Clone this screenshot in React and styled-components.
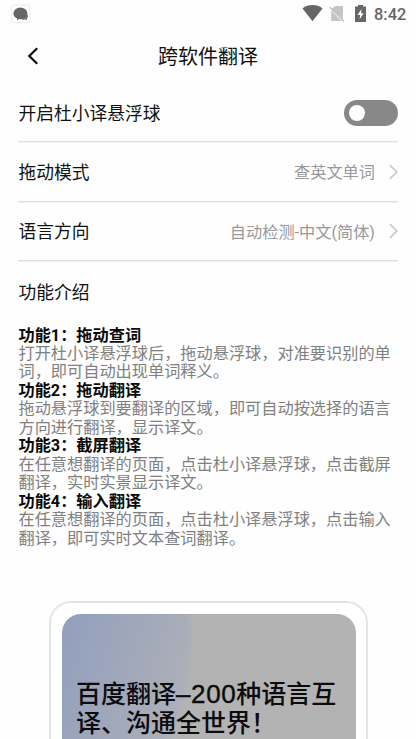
import styled, { createGlobalStyle } from "styled-components";

const GlobalStyle = createGlobalStyle`
  * {
    box-sizing: border-box;
  }

  body {
    margin: 0;
    background: #fefefe;
    font-family: Roboto, "Noto Sans CJK SC", sans-serif;
  }
`;

const Page = styled.div`
  height: 739px;
  overflow: hidden;
  display: flex;
  flex-direction: column;
  background: #fefefe;
`;

const StatusBar = styled.div`
  height: 28px;
  flex-shrink: 0;
  padding: 0 9px 0 11px;
  display: flex;
  justify-content: space-between;
`;

const StatusIcons = styled.div`
  display: flex;
`;

const Clock = styled.span`
  width: 33px;
  margin-left: 8px;
  padding-top: 5px;
  font-size: 16.4px;
  line-height: 19px;
  font-weight: 500;
  color: #666;
  white-space: nowrap;
`;

const Header = styled.header`
  height: 55px;
  flex-shrink: 0;
  padding: 1px 18px 0;
  display: grid;
  grid-template-columns: 30px 1fr 30px;
  align-items: center;
`;

const BackButton = styled.button`
  height: 30px;
  padding: 0 0 1px 9px;
  border: 0;
  background: none;
  display: flex;
  align-items: center;
`;

const Title = styled.h1`
  margin: 0;
  padding-top: 2px;
  font-size: 20px;
  line-height: 30px;
  font-weight: 400;
  text-align: center;
  color: #111;
`;

const Settings = styled.div`
  padding: 0 18px;
`;

const Row = styled.div`
  height: 59.33px;
  display: flex;
  align-items: center;
  justify-content: space-between;
  border-bottom: 1.5px solid #dfdfdf;
  box-shadow: 0 1px 0 #f1f1f1;
`;

const Label = styled.span`
  padding: 3px 0 0 0.5px;
  font-size: 17.75px;
  line-height: 26px;
  color: #111;
`;

const Value = styled.span`
  padding-top: 1px;
  display: flex;
  align-items: center;
  gap: 14px;
  font-size: 16.2px;
  line-height: 24px;
  color: #999;
`;

const ValueText = styled.span`
  padding-top: 3px;
`;

const Switch = styled.button`
  width: 54px;
  height: 26px;
  margin: 2px 0 0;
  padding: 0 5px;
  border: 0;
  border-radius: 13px;
  background: #888;
  display: flex;
  align-items: center;
`;

const Knob = styled.span`
  width: 16px;
  height: 16px;
  border-radius: 50%;
  background: #fff;
`;

const Intro = styled.section`
  padding: 19px 18px 0 18.5px;
`;

const IntroTitle = styled.h2`
  margin: 0 0 20.6px;
  font-size: 17.75px;
  line-height: 26px;
  font-weight: 400;
  color: #111;
`;

const Feature = styled.div`
  font-size: 16.2px;
  line-height: 18.45px;
  white-space: pre;
`;

const FeatureName = styled.div`
  font-weight: 700;
  color: #0a0a0a;
`;

const FeatureText = styled.div`
  color: #808080;
`;

const Phone = styled.div`
  width: 319px;
  height: 200px;
  margin: 53px 0 0 49px;
  padding: 11px 10px 0 11px;
  flex-shrink: 0;
  border: 2px solid #e4e5eb;
  border-radius: 22px;
  background: #fff;
`;

const Screen = styled.div`
  height: 190px;
  padding: 66px 0 0 14px;
  border-radius: 19px;
  background:
    radial-gradient(ellipse 134px 170px at 0 30px, #b3b3b300 93%, #b3b3b3 100%),
    linear-gradient(107deg, #919fbf 0%, #a0a7ba 22%, #adb0b8 42%, #b3b3b3 55%);
`;

const Slogan = styled.div`
  font-family: "Liberation Sans", "Noto Sans CJK SC", sans-serif;
  font-size: 25px;
  line-height: 29px;
  font-weight: 500;
  color: #0c0c0e;
  white-space: pre;
`;

const Digits = styled.span`
  font-size: 26px;
  line-height: 1;
  letter-spacing: 0.6px;
  -webkit-text-stroke: 0.4px #0c0c0e;
`;

const features = [
  {
    name: "功能1：拖动查词",
    text: "打开杜小译悬浮球后，拖动悬浮球，对准要识别的单\n词，即可自动出现单词释义。",
  },
  {
    name: "功能2：拖动翻译",
    text: "拖动悬浮球到要翻译的区域，即可自动按选择的语言\n方向进行翻译，显示译文。",
  },
  {
    name: "功能3：截屏翻译",
    text: "在任意想翻译的页面，点击杜小译悬浮球，点击截屏\n翻译，实时实景显示译文。",
  },
  {
    name: "功能4：输入翻译",
    text: "在任意想翻译的页面，点击杜小译悬浮球，点击输入\n翻译，即可实时文本查词翻译。",
  },
];

function ChatIcon() {
  return (
    <svg width="20" height="28" viewBox="0 0 20 28">
      <rect x="0.8" y="5" width="18" height="17.5" rx="2" fill="#fff" stroke="#e9e9e9" />
      <path d="M16.6 14.5c.9 2.2.2 3.5-.8 4.3l.3 1.6-1.9-.8c-2 .3-3.3-.2-4.2-1.2z" fill="#777" />
      <ellipse cx="9.4" cy="13.4" rx="7" ry="5.9" fill="#666" />
      <path d="M6 17.5v2.8l3.3-2z" fill="#666" />
    </svg>
  );
}

function SystemIcons() {
  return (
    <svg width="64" height="28" viewBox="302 0 64 28">
      <path d="M302.5 8.4C308.2 4 316.8 4 322.5 8.4L312.5 21.2z" fill="#666" />
      <path d="M335.5 6H343v13.2L331.8 8.8zM331.2 10.2L341.5 21h-10.3z" fill="#c4c4c4" />
      <path d="M329.8 7L344 21.5" stroke="#bbb" strokeWidth="1.2" />
      <path d="M358 5h5v1.5h3V22h-11V6.5h3z" fill="#666" />
      <path d="M361.5 9l-4 6h2.7l-.6 4.5 4-6.2h-2.5z" fill="#fff" />
    </svg>
  );
}

function Chevron() {
  return (
    <svg width="9" height="16" viewBox="0 0 9 16">
      <path d="M.8 1l7 7-7 7" fill="none" stroke="#c8c8c8" strokeWidth="1.7" />
    </svg>
  );
}

function App() {
  return (
    <Page>
      <GlobalStyle />
      <StatusBar>
        <ChatIcon />
        <StatusIcons>
          <SystemIcons />
          <Clock>8:42</Clock>
        </StatusIcons>
      </StatusBar>
      <Header>
        <BackButton aria-label="返回">
          <svg width="12" height="18" viewBox="0 0 12 18">
            <path d="M10.2 1.3L2.3 9l7.9 7.7" fill="none" stroke="#0a0a0a" strokeWidth="2.2" />
          </svg>
        </BackButton>
        <Title>跨软件翻译</Title>
      </Header>
      <Settings>
        <Row>
          <Label>开启杜小译悬浮球</Label>
          <Switch role="switch" aria-checked="false">
            <Knob />
          </Switch>
        </Row>
        <Row>
          <Label>拖动模式</Label>
          <Value>
            <ValueText>查英文单词</ValueText>
            <Chevron />
          </Value>
        </Row>
        <Row>
          <Label>语言方向</Label>
          <Value>
            <ValueText>自动检测-中文(简体)</ValueText>
            <Chevron />
          </Value>
        </Row>
      </Settings>
      <Intro>
        <IntroTitle>功能介绍</IntroTitle>
        {features.map((feature) => (
          <Feature key={feature.name}>
            <FeatureName>{feature.name}</FeatureName>
            <FeatureText>{feature.text}</FeatureText>
          </Feature>
        ))}
      </Intro>
      <Phone>
        <Screen>
          <Slogan>
            百度翻译<Digits>–200</Digits>种语言互{"\n"}译、沟通全世界！
          </Slogan>
        </Screen>
      </Phone>
    </Page>
  );
}

export default App;
